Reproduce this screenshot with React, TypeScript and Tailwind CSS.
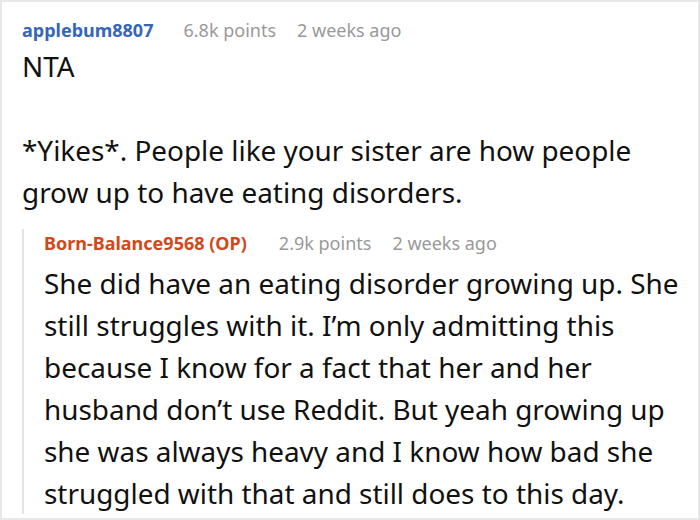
export default function App() {
  return (
    <div
      className="h-[520px] w-[700px] overflow-hidden border-2 border-[#e8e8e8] bg-white pl-5 pr-2 pt-[14px]"
      style={{ fontFamily: '"Noto Sans", "Open Sans", sans-serif' }}
    >
      <CommentHeader user="applebum8807" userClass="text-[#3666b8]" points="6.8k points" time="2 weeks ago" gap="ml-[30px]" />
      <div className="mt-[1px] text-[27.9px] leading-[42px] text-[#111]">
        <p>NTA</p>
        <p className="mt-[42px]">
          *Yikes*. People like your sister are how people grow up to have eating disorders.
        </p>
      </div>

      <div className="mt-[16px] border-l-2 border-[#e4e4e4] pl-5">
        <CommentHeader
          user="Born-Balance9568 (OP)"
          userClass="text-[#d1491a]"
          points="2.9k points"
          time="2 weeks ago"
          gap="ml-[32px]"
        />
        <p className="mt-[5px] text-[27.9px] leading-[42px] text-[#111]">
          She did have an eating disorder growing up. She still struggles with it. I’m only admitting
          this because I know for a fact that her and her husband don’t use Reddit. But yeah growing up
          she was always heavy and I know how bad she struggled with that and still does to this day.
        </p>
      </div>
    </div>
  );
}

function CommentHeader({
  user,
  userClass,
  points,
  time,
  gap,
}: {
  user: string;
  userClass: string;
  points: string;
  time: string;
  gap: string;
}) {
  return (
    <div className="flex items-baseline text-[18px] leading-[28px]">
      <span className={`font-bold ${userClass}`}>{user}</span>
      <span className={`${gap} text-[#999]`}>{points}</span>
      <span className="ml-[21px] text-[#999]">{time}</span>
    </div>
  );
}
